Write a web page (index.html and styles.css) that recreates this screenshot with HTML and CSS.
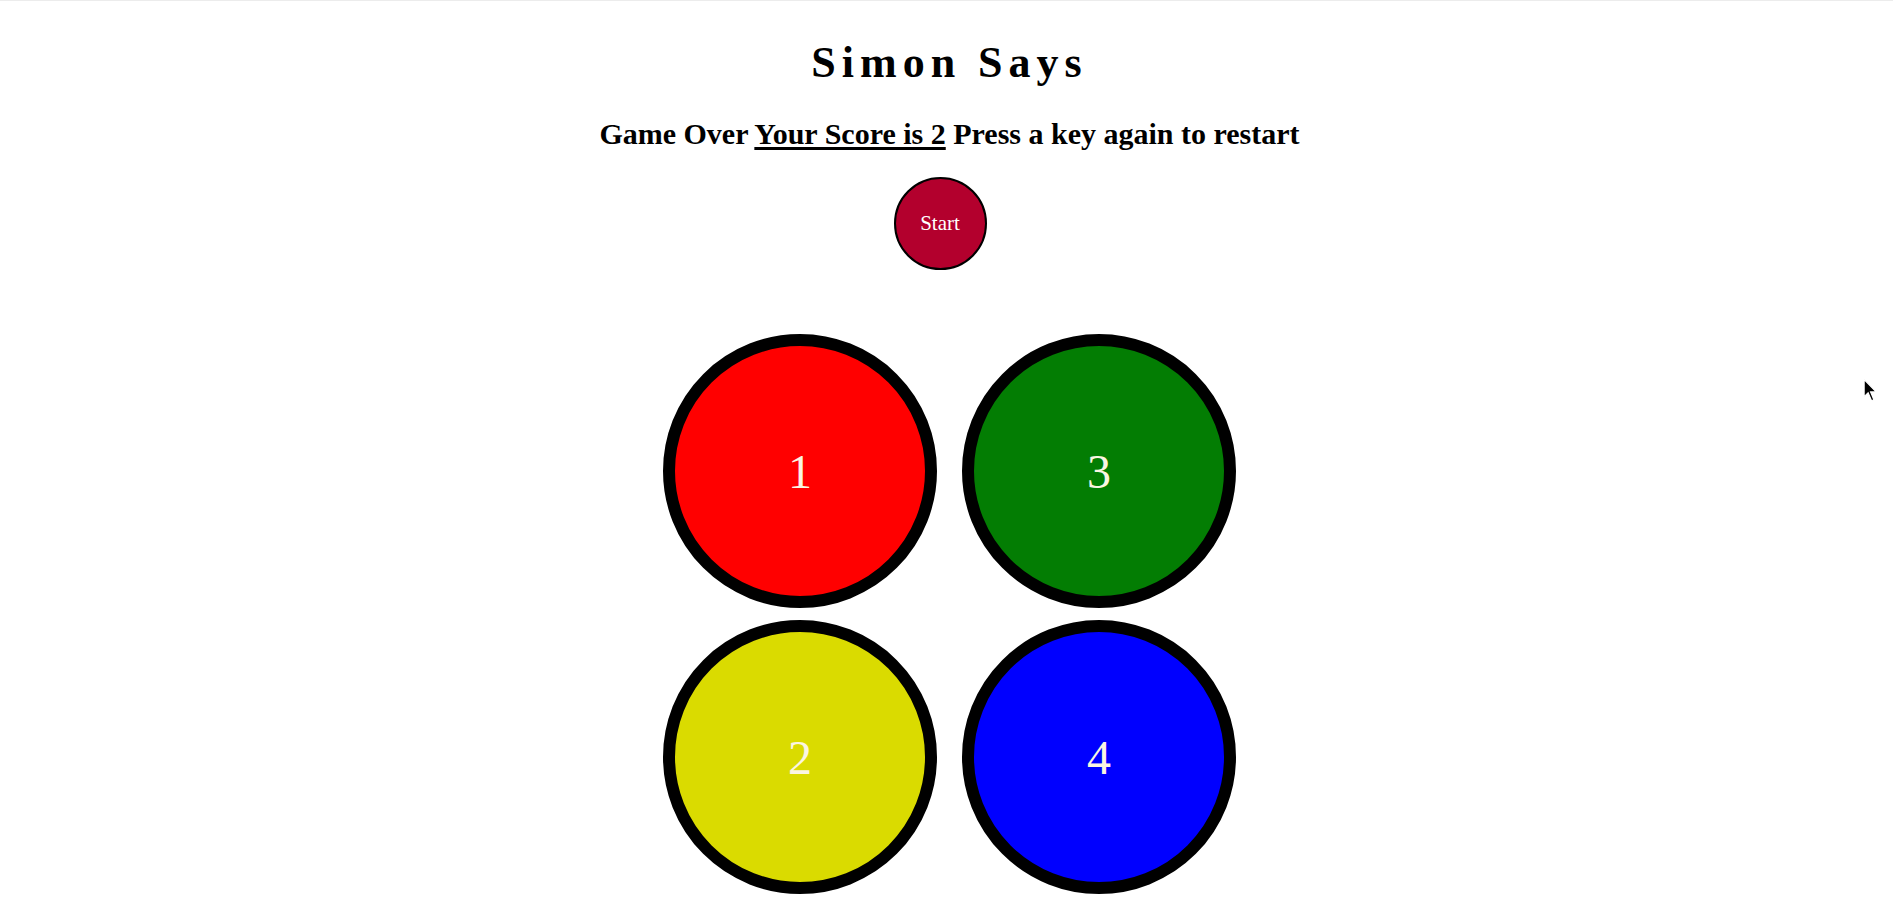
FILE: index.html
```html
<!DOCTYPE html>
<html lang="en">
<head>
<meta charset="utf-8">
<title>Simon Says</title>
<link rel="stylesheet" href="styles.css">
</head>
<body>
<div class="page">
  <h1 class="title">Simon Says</h1>
  <h2 class="status">Game Over <u class="score">Your Score is 2</u> Press a key again to restart</h2>
  <div class="start-row">
    <button class="start" type="button">Start</button>
  </div>
  <div class="board">
    <div class="pad red">1</div>
    <div class="pad green">3</div>
    <div class="pad yellow">2</div>
    <div class="pad blue">4</div>
  </div>
</div>
<svg class="cursor" width="16" height="26" viewBox="0 0 14 22"><path d="M1 1 L1 16 L4.5 12.5 L7.5 19.5 L9.5 18.6 L6.6 11.8 L11.5 11.8 Z" fill="#000" stroke="#fff" stroke-width="1"/></svg>
</body>
</html>
```
FILE: styles.css
```css
html, body {
  margin: 0;
  padding: 0;
  background: #ffffff;
}
body {
  font-family: "Liberation Serif", "Times New Roman", serif;
  color: #000;
  border-top: 1px solid #ececec;
  height: 912px;
  overflow: hidden;
  position: relative;
}
.page {
  display: flex;
  flex-direction: column;
  align-items: center;
}
.title {
  margin: 36px 0 0 0;
  font-size: 44px;
  font-weight: bold;
  letter-spacing: 6px;
  padding-left: 6px;
  line-height: normal;
}
.status {
  margin: 29px 0 0 0;
  font-size: 30px;
  font-weight: bold;
  line-height: normal;
  padding-left: 6px;
}
.score {
  text-decoration-thickness: 3px;
  text-underline-offset: 3px;
}
.start-row {
  margin-top: 26px;
  display: flex;
  justify-content: center;
}
.start {
  width: 93px;
  height: 93px;
  border-radius: 50%;
  border: 2.5px solid #000;
  background: #b3002d;
  color: #fff;
  font-family: "Liberation Serif", "Times New Roman", serif;
  font-size: 21px;
  margin-right: 13px;
  padding: 0;
}
.board {
  margin-top: 64px;
  display: grid;
  grid-template-columns: 274px 274px;
  grid-auto-rows: 274px;
  column-gap: 25px;
  row-gap: 12px;
  padding-left: 6px;
}
.pad {
  box-sizing: border-box;
  border: 12px solid #000;
  border-radius: 50%;
  display: flex;
  align-items: center;
  justify-content: center;
  font-size: 48px;
  color: #fbf5e2;
}
.red { background: #ff0000; }
.green { background: #037d03; }
.yellow { background: #dadb00; }
.blue { background: #0000ff; }
.cursor {
  position: absolute;
  left: 1863px;
  top: 377px;
}
```
